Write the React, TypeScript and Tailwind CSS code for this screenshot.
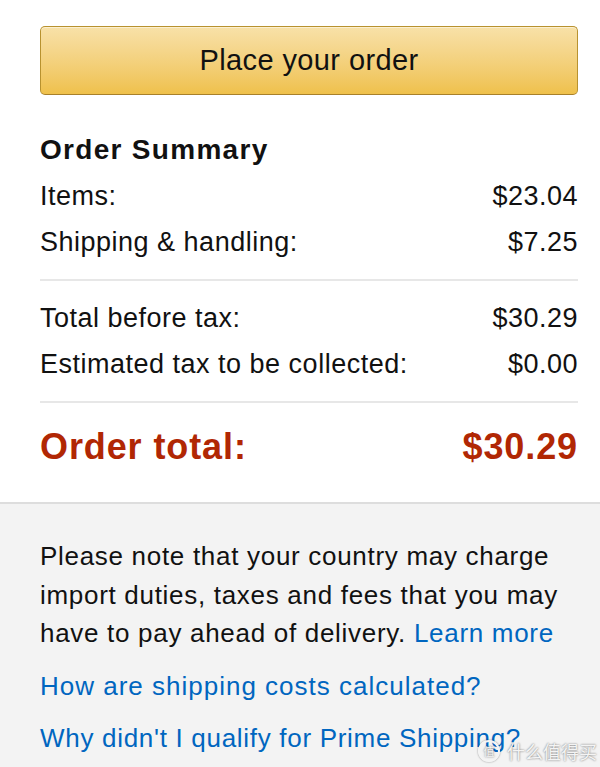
import React from "react";

const rows = [
  { label: "Items:", value: "$23.04" },
  { label: "Shipping & handling:", value: "$7.25" },
];

const taxRows = [
  { label: "Total before tax:", value: "$30.29" },
  { label: "Estimated tax to be collected:", value: "$0.00" },
];

function Row({ label, value }: { label: string; value: string }) {
  return (
    <div className="flex items-center justify-between h-[46px] text-[27px] tracking-[0.5px] text-[#111]">
      <span>{label}</span>
      <span>{value}</span>
    </div>
  );
}

export default function App() {
  return (
    <div
      className="relative w-[600px] h-[767px] overflow-hidden bg-white"
      style={{ fontFamily: '"Liberation Sans", Arial, sans-serif' }}
    >
      <div className="pl-[40px] pr-[22px] pt-[26px] pb-[11px]">
        <button
          type="button"
          className="w-full h-[69px] rounded-[5px] border border-[#b8922f] border-b-[#a8802a] bg-gradient-to-b from-[#f8e1a8] to-[#efc14b] text-[29px] tracking-[0.4px] text-[#111] shadow-[inset_0_1px_0_#fcf0d0]"
        >
          Place your order
        </button>

        <h2 className="mt-[32px] h-[46px] flex items-center text-[28px] tracking-[1.3px] font-bold text-[#111]">
          Order Summary
        </h2>
        {rows.map((r) => (
          <Row key={r.label} {...r} />
        ))}
        <div className="mt-[14px] mb-[14px] h-[2px] bg-[#e7e7e7]" />
        {taxRows.map((r) => (
          <Row key={r.label} {...r} />
        ))}
        <div className="mt-[14px] h-[2px] bg-[#e7e7e7]" />
        <div className="flex items-center justify-between h-[88px] text-[36px] tracking-[0.9px] font-bold text-[#b12704]">
          <span>Order total:</span>
          <span>$30.29</span>
        </div>
      </div>

      <div className="border-t-2 border-[#dddddd] bg-[#f3f3f3] pl-[40px] pr-[22px] pt-[33px] h-full">
        <p className="text-[26px] leading-[38.5px] tracking-[0.7px] text-[#111]">
          Please note that your country may charge import duties, taxes and fees that you may have to
          pay ahead of delivery. <a className="text-[#0066c0]">Learn more</a>
        </p>
        <a className="mt-[14px] block text-[26px] leading-[38px] tracking-[1px] text-[#0066c0]">
          How are shipping costs calculated?
        </a>
        <a className="mt-[14px] block text-[26px] leading-[38px] tracking-[0.7px] text-[#0066c0]">
          Why didn't I qualify for Prime Shipping?
        </a>
      </div>

      {/* watermark */}
      <div className="absolute left-[478px] top-[740px] flex items-center gap-[7px]">
        <div
          className="w-[22px] h-[22px] rounded-full border-2 border-[#f4f4f4] flex items-center justify-center text-[11px] text-[#f4f4f4] shadow-[0_0_2px_rgba(0,0,0,0.45)]"
          style={{ fontFamily: '"Noto Sans CJK SC", sans-serif', textShadow: "0 0 2px rgba(0,0,0,0.6)" }}
        >
          值
        </div>
        <span
          className="text-[18px] leading-[22px] text-[#f4f4f4]"
          style={{ fontFamily: '"Noto Sans CJK SC", sans-serif', textShadow: "0 0 2px rgba(0,0,0,0.6)" }}
        >
          什么值得买
        </span>
      </div>
    </div>
  );
}
